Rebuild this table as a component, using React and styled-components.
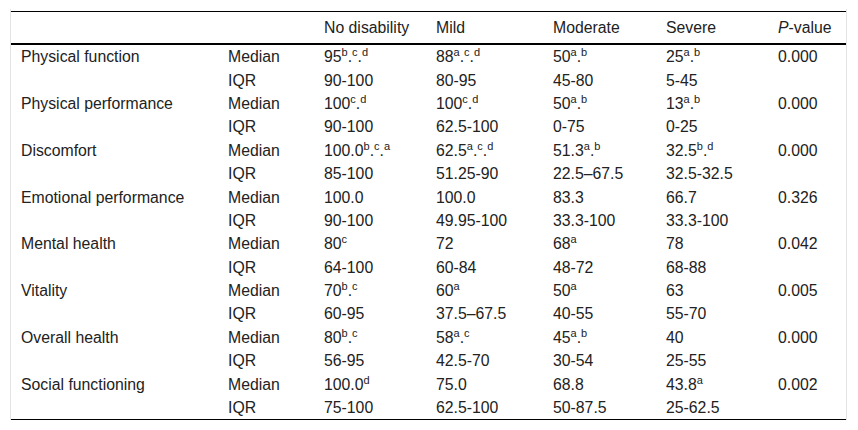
import React from "react";
import styled, { createGlobalStyle } from "styled-components";

const GlobalStyle = createGlobalStyle`
  body {
    margin: 0;
    background: #fff;
    font-family: "Liberation Sans", Arial, sans-serif;
  }
`;

const Page = styled.div`
  padding: 9px 11px 0 10px;
`;

const Frame = styled.div`
  border-left: 1px solid #e3e3e3;
  border-right: 1px solid #e3e3e3;
  padding-top: 2px;
`;

const Table = styled.table`
  width: 100%;
  border-collapse: collapse;
  table-layout: fixed;
  border-top: 1px solid #000;
  border-bottom: 1px solid #000;
  font-size: 15.8px;
  color: #222;
`;

const HeadRow = styled.tr`
  border-bottom: 2px solid #000;
`;

const HeadCell = styled.th`
  height: 31px;
  padding: 0 0 0 10px;
  text-align: left;
  font-weight: normal;
  vertical-align: middle;
`;

const Cell = styled.td`
  height: 23.4px;
  padding: 0 0 0 10px;
  vertical-align: middle;
  white-space: nowrap;
  line-height: 17px;
`;

const Sup = styled.sup`
  font-size: 11px;
  line-height: 0;
  vertical-align: 6px;
`;

const widths = [207, 96, 112, 117, 113, 112, 78];

// value like "95^b.^c.^d" -> plain text with superscripts
const renderValue = (v) => {
  const parts = v.split(/(\^[a-d,]+)/);
  return parts.map((p, i) =>
    p.startsWith("^") ? <Sup key={i}>{p.slice(1)}</Sup> : <React.Fragment key={i}>{p}</React.Fragment>
  );
};

const rows = [
  ["Physical function", ["95^b.^c.^d", "88^a.^c.^d", "50^a.^b", "25^a.^b", "0.000"], ["90-100", "80-95", "45-80", "5-45"]],
  ["Physical performance", ["100^c.^d", "100^c.^d", "50^a.^b", "13^a.^b", "0.000"], ["90-100", "62.5-100", "0-75", "0-25"]],
  ["Discomfort", ["100.0^b.^c.^a", "62.5^a.^c.^d", "51.3^a.^b", "32.5^b.^d", "0.000"], ["85-100", "51.25-90", "22.5–67.5", "32.5-32.5"]],
  ["Emotional performance", ["100.0", "100.0", "83.3", "66.7", "0.326"], ["90-100", "49.95-100", "33.3-100", "33.3-100"]],
  ["Mental health", ["80^c", "72", "68^a", "78", "0.042"], ["64-100", "60-84", "48-72", "68-88"]],
  ["Vitality", ["70^b.^c", "60^a", "50^a", "63", "0.005"], ["60-95", "37.5–67.5", "40-55", "55-70"]],
  ["Overall health", ["80^b.^c", "58^a.^c", "45^a.^b", "40", "0.000"], ["56-95", "42.5-70", "30-54", "25-55"]],
  ["Social functioning", ["100.0^d", "75.0", "68.8", "43.8^a", "0.002"], ["75-100", "62.5-100", "50-87.5", "25-62.5"]],
];

export default function App() {
  return (
    <>
      <GlobalStyle />
      <Page>
        <Frame>
          <Table>
            <colgroup>
              {widths.map((w, i) => (
                <col key={i} style={{ width: w }} />
              ))}
            </colgroup>
            <thead>
              <HeadRow>
                <HeadCell />
                <HeadCell />
                <HeadCell>No disability</HeadCell>
                <HeadCell>Mild</HeadCell>
                <HeadCell>Moderate</HeadCell>
                <HeadCell>Severe</HeadCell>
                <HeadCell>
                  <i>P</i>-value
                </HeadCell>
              </HeadRow>
            </thead>
            <tbody>
              {rows.map(([label, median, iqr]) => (
                <React.Fragment key={label}>
                  <tr>
                    <Cell>{label}</Cell>
                    <Cell>Median</Cell>
                    {median.map((v, i) => (
                      <Cell key={i}>{renderValue(v)}</Cell>
                    ))}
                  </tr>
                  <tr>
                    <Cell />
                    <Cell>IQR</Cell>
                    {iqr.map((v, i) => (
                      <Cell key={i}>{v}</Cell>
                    ))}
                    <Cell />
                  </tr>
                </React.Fragment>
              ))}
            </tbody>
          </Table>
        </Frame>
      </Page>
    </>
  );
}
